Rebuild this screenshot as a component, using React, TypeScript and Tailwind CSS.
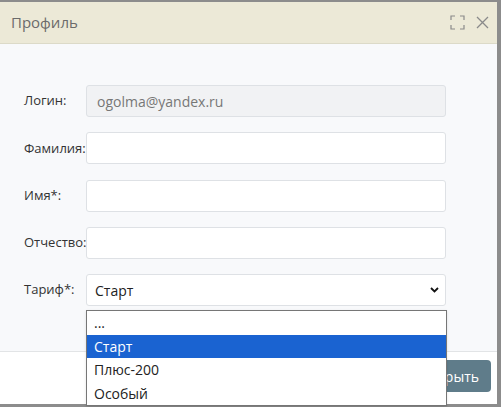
import { useState } from 'react'

/* Profile dialog with an open tariff dropdown */

const FONT = { fontFamily: '"Open Sans", "Noto Sans", sans-serif' }

const rows = [
  { label: 'Логин:', value: 'ogolma@yandex.ru', disabled: true },
  { label: 'Фамилия:', value: '' },
  { label: 'Имя*:', value: '' },
  { label: 'Отчество:', value: '' },
]

const options = ['...', 'Старт', 'Плюс-200', 'Особый']

export default function App() {
  const [tariff] = useState('Старт')

  return (
    <div className="w-[501px] h-[407px] bg-[#8c8c8c] pt-[2px] pr-[4px] pb-[3px] overflow-hidden" style={FONT}>
      <div className="relative h-full flex flex-col bg-white">
        {/* Header */}
        <div className="h-[42px] shrink-0 flex items-center justify-between pl-[11px] pr-[8px] bg-[#ece9d7] border-b border-[#dcdac8]">
          <span className="text-[15px] text-[#6b6b6b]">Профиль</span>
          <div className="flex items-center gap-[11px] text-[#8a8a8a]">
            <svg width="15" height="15" viewBox="0 0 15 15" fill="none" stroke="currentColor" strokeWidth="1.2">
              <path d="M1 5V1h4M10 1h4v4M14 10v4h-4M5 14H1v-4" />
            </svg>
            <svg width="13" height="13" viewBox="0 0 13 13" fill="none" stroke="currentColor" strokeWidth="1.3">
              <path d="M1 1l11 11M12 1L1 12" />
            </svg>
          </div>
        </div>

        {/* Body */}
        <div className="h-[307px] shrink-0 bg-[#f8f9fb] pt-[41px] pl-[24px] flex flex-col gap-[15.3px]">
          {rows.map((r) => (
            <div key={r.label} className="flex items-center">
              <label className="w-[62px] text-[13px] text-[#333]">{r.label}</label>
              <div
                className={`w-[360px] h-[32px] flex items-center px-[10px] text-[14px] border border-[#dee1e5] rounded-[3px] ${
                  r.disabled ? 'bg-[#f1f2f4] text-[#777]' : 'bg-white text-[#333]'
                }`}
              >
                {r.value}
              </div>
            </div>
          ))}
          <div className="flex items-center">
            <label className="w-[62px] text-[13px] text-[#333]">Тариф*:</label>
            <div className="w-[360px] h-[32px] flex items-center justify-between pl-[8px] pr-[6px] text-[14px] text-[#222] bg-white border border-[#dee1e5] rounded-[3px]">
              <span>{tariff}</span>
              <svg width="9" height="6" viewBox="0 0 9 6" fill="none" stroke="#111" strokeWidth="1.8">
                <path d="M1 1l3.5 3.5L8 1" />
              </svg>
            </div>
          </div>
        </div>

        {/* Footer */}
        <div className="flex-1 flex justify-end items-start pt-[8px] pr-[6px] border-t border-[#e2e4e6] bg-white">
          <button className="h-[32px] px-[12px] rounded-[4px] bg-[#5f7c8a] text-white text-[14px]">Закрыть</button>
        </div>

        {/* Open dropdown list */}
        <div className="absolute left-[86px] top-[308px] w-[361px] bg-white border border-[#767676] shadow-sm">
          {options.map((o) => (
            <div
              key={o}
              className={`h-[23.5px] flex items-center px-[7px] text-[14px] ${
                o === tariff ? 'bg-[#1a63d1] text-white' : 'text-[#222]'
              }`}
            >
              {o}
            </div>
          ))}
        </div>
      </div>
    </div>
  )
}
